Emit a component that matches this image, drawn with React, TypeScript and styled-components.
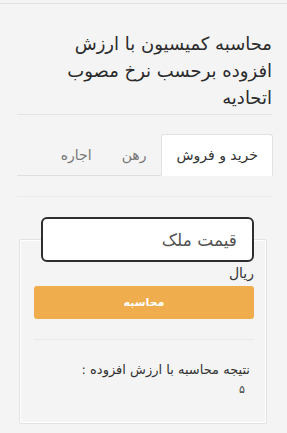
import React, { useState } from 'react';
import styled, { createGlobalStyle } from 'styled-components';

const GlobalStyle = createGlobalStyle`
    html, body {
        margin: 0;
        padding: 0;
        background: #f4f4f4;
    }
    body {
        font-family: "DejaVu Sans", "Noto Sans", sans-serif;
        color: #333;
    }
`

const tabs = ['خرید و فروش', 'رهن', 'اجاره'];

const StyledPage = styled.div`
    direction: rtl;
    width: 287px;
    min-height: 433px;
    box-sizing: border-box;
    margin-top: 3px;
    border-top: 1px solid #e0e0e0;
    padding: 0 15px 0 15px;
`
const StyledTitle = styled.h1`
    margin: 0;
    padding: 26px 0 3px 0;
    font-size: 18px;
    font-weight: normal;
    line-height: 27px;
    color: #2b2b2b;
    border-bottom: 1px solid #e3e3e3;
    margin-left: 2px;
`
const StyledTabList = styled.div`
    display: flex;
    margin-top: 19px;
    margin-left: 2px;
    border-bottom: 1px solid #dedede;
`
const StyledTab = styled.div<{ $active: boolean }>`
    padding: 0 14px;
    height: 42px;
    display: flex;
    align-items: center;
    font-size: 14px;
    box-sizing: border-box;
    margin-bottom: -1px;
    cursor: pointer;
    border: 1px solid ${p => p.$active ? '#e2e2e2' : 'transparent'};
    border-bottom-color: ${p => p.$active ? '#fff' : 'transparent'};
    border-radius: 3px 3px 0 0;
    background: ${p => p.$active ? '#fff' : 'transparent'};
    color: ${p => p.$active ? '#333' : '#777'};
    margin-right: ${p => p.$active ? '-1px' : '0'};
`
const StyledPane = styled.div`
    margin-top: 20px;
    margin-left: 2px;
    border-top: 1px solid #ececec;
`
const StyledCard = styled.div`
    margin: 42px 5px 0 2px;
    padding: 0 12px 27px 14px;
    border: 1px solid #e2e2e2;
    box-shadow: inset 0 0 0 1px #fff;
    border-radius: 2px;
`
const StyledInput = styled.input`
    display: block;
    width: 213px;
    height: 45px;
    box-sizing: border-box;
    margin: -23px 0 0 0;
    padding: 0 15px;
    border: 2px solid #2e2e2e;
    border-radius: 6px;
    background: #fff;
    font-family: inherit;
    font-size: 17px;
    direction: rtl;
    outline: none;
    &::placeholder {
        color: #555;
    }
`
const StyledUnit = styled.div`
    font-size: 14px;
    margin-top: 2px;
    line-height: 19px;
    color: #333;
`
const StyledButton = styled.button`
    display: block;
    width: 100%;
    height: 33px;
    margin-top: 3px;
    border: none;
    border-radius: 3px;
    background: #f0ad4e;
    color: #fff;
    font-family: inherit;
    font-size: 11px;
    font-weight: bold;
    cursor: pointer;
`
const StyledDivider = styled.div`
    margin-top: 20px;
    border-top: 1px solid #e9e9e9;
`
const StyledResult = styled.div`
    margin-top: 20px;
    padding-right: 4px;
    font-size: 13px;
    line-height: 20px;
    color: #333;
`
const StyledValue = styled.div`
    margin-top: 3px;
    padding-right: 9px;
    font-size: 11px;
    color: #444;
`

const App: React.FC = () => {
    const [activeTab, setActiveTab] = useState(0);
    return (<React.Fragment>
        <GlobalStyle />
        <StyledPage>
            <StyledTitle>محاسبه کمیسیون با ارزش<br />افزوده برحسب نرخ مصوب<br />اتحادیه</StyledTitle>
            <StyledTabList>
                {tabs.map((tab, i) => (<StyledTab key={tab} $active={i === activeTab} onClick={() => setActiveTab(i)}>{tab}</StyledTab>))}
            </StyledTabList>
            <StyledPane>
                <StyledCard>
                    <StyledInput placeholder="قیمت ملک" />
                    <StyledUnit>ریال</StyledUnit>
                    <StyledButton>محاسبه</StyledButton>
                    <StyledDivider />
                    <StyledResult>نتیجه محاسبه با ارزش افزوده :</StyledResult>
                    <StyledValue>۵</StyledValue>
                </StyledCard>
            </StyledPane>
        </StyledPage>
    </React.Fragment>);
}

export default App;
